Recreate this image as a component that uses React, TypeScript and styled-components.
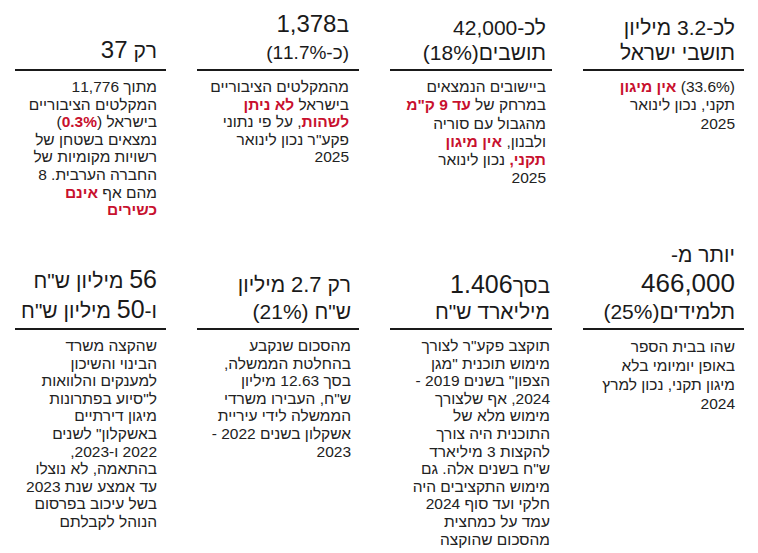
import React, { ReactNode } from 'react'
import styled, { createGlobalStyle } from 'styled-components'

const GlobalStyle = createGlobalStyle`
  html, body {
    margin: 0;
    padding: 0;
    background: #fff;
  }
  body {
    font-family: 'Liberation Sans', Arial, sans-serif;
  }
`

const Page = styled.div`
  width: 758px;
  height: 553px;
  overflow: hidden;
  box-sizing: border-box;
  padding: 0 14px 0 15px;
  direction: rtl;
  background: #fff;
  color: #1c1c1c;
`

const Row = styled.div<{ $height?: number }>`
  display: grid;
  grid-template-columns: 161px 162px 162px 151px;
  column-gap: 31px;
  height: ${p => (p.$height ? `${p.$height}px` : 'auto')};
`

const Cell = styled.div`
  display: flex;
  flex-direction: column;
`

const Head = styled.div<{ $height: number; $inset: number }>`
  height: ${p => p.$height}px;
  box-sizing: border-box;
  display: flex;
  flex-direction: column;
  justify-content: flex-end;
  padding: 0 ${p => p.$inset}px 4px 0;
`

const HeadText = styled.div`
  font-size: 21px;
  line-height: 1.2;
  text-align: right;
  white-space: nowrap;
  color: #1a1a1a;
`

const Big = styled.span<{ $size?: number }>`
  font-size: ${p => p.$size ?? 25}px;
`

const Rule = styled.div`
  height: 2px;
  background: #1a1a1a;
`

const Body = styled.div<{ $inset: number; $lineHeight?: number }>`
  padding: 7px ${p => p.$inset}px 0 0;
  font-size: 15.5px;
  line-height: ${p => p.$lineHeight ?? 17.6}px;
  text-align: right;
  white-space: nowrap;
  color: #222;
`

const Hot = styled.b`
  color: #c8102e;
  font-weight: bold;
`

type Item = { head: ReactNode; body: ReactNode; inset?: number; lineHeight?: number }

const topRow: Item[] = [
  {
    lineHeight: 18.3,
    head: (
      <>
        לכ-3.2 מיליון
        <br />
        תושבי ישראל
      </>
    ),
    body: (
      <>
        (33.6%) <Hot>אין מיגון</Hot>
        <br />
        תקני, נכון לינואר
        <br />
        2025
      </>
    )
  },
  {
    inset: 6,
    lineHeight: 18.3,
    head: (
      <>
        לכ-42,000
        <br />
        תושבים(18%)
      </>
    ),
    body: (
      <>
        ביישובים הנמצאים
        <br />
        במרחק של <Hot>עד 9 ק"מ</Hot>
        <br />
        מהגבול עם סוריה
        <br />
        ולבנון, <Hot>אין מיגון</Hot>
        <br />
        <Hot>תקני,</Hot> נכון לינואר
        <br />
        2025
      </>
    )
  },
  {
    inset: 10,
    head: (
      <>
        ב<Big $size={24}>1,378</Big>
        <br />
        <Big $size={19}>(כ-11.7%)</Big>
      </>
    ),
    body: (
      <>
        מהמקלטים הציבוריים
        <br />
        בישראל <Hot>לא ניתן</Hot>
        <br />
        <Hot>לשהות</Hot>, על פי נתוני
        <br />
        פקע"ר נכון לינואר
        <br />
        2025
      </>
    )
  },
  {
    head: (
      <>
        רק <Big $size={24}>37</Big>
      </>
    ),
    body: (
      <>
        מתוך 11,776
        <br />
        המקלטים הציבוריים
        <br />
        בישראל (<Hot>0.3%</Hot>)
        <br />
        נמצאים בשטחן של
        <br />
        רשויות מקומיות של
        <br />
        החברה הערבית. 8
        <br />
        מהם אף <Hot>אינם</Hot>
        <br />
        <Hot>כשירים</Hot>
      </>
    )
  }
]

const bottomRow: Item[] = [
  {
    lineHeight: 19,
    head: (
      <>
        יותר מ-
        <br />
        <Big $size={26}>466,000</Big>
        <br />
        תלמידים(25%)
      </>
    ),
    body: (
      <>
        שהו בבית הספר
        <br />
        באופן יומיומי בלא
        <br />
        מיגון תקני, נכון למרץ
        <br />
        2024
      </>
    )
  },
  {
    inset: 2,
    head: (
      <>
        בסך<Big>1.406</Big>
        <br />
        מיליארד ש"ח
      </>
    ),
    body: (
      <>
        תוקצב פקע"ר לצורך
        <br />
        מימוש תוכנית "מגן
        <br />
        הצפון" בשנים 2019 -
        <br />
        2024, אף שלצורך
        <br />
        מימוש מלא של
        <br />
        התוכנית היה צורך
        <br />
        להקצות 3 מיליארד
        <br />
        ש"ח בשנים אלה. גם
        <br />
        מימוש התקציבים היה
        <br />
        חלקי ועד סוף 2024
        <br />
        עמד על כמחצית
        <br />
        מהסכום שהוקצה
      </>
    )
  },
  {
    inset: 8,
    head: (
      <>
        רק <Big $size={22}>2.7</Big> מיליון
        <br />
        ש"ח (21%)
      </>
    ),
    body: (
      <>
        מהסכום שנקבע
        <br />
        בהחלטת הממשלה,
        <br />
        בסך 12.63 מיליון
        <br />
        ש"ח, העבירו משרדי
        <br />
        הממשלה לידי עיריית
        <br />
        אשקלון בשנים 2022 -
        <br />
        2023
      </>
    )
  },
  {
    head: (
      <>
        <Big>56</Big> מיליון ש"ח
        <br />
        ו-<Big>50</Big> מיליון ש"ח
      </>
    ),
    body: (
      <>
        שהקצה משרד
        <br />
        הבינוי והשיכון
        <br />
        למענקים והלוואות
        <br />
        ל"סיוע בפתרונות
        <br />
        מיגון דירתיים
        <br />
        באשקלון" לשנים
        <br />
        2022 ו-2023,
        <br />
        בהתאמה, לא נוצלו
        <br />
        עד אמצע שנת 2023
        <br />
        בשל עיכוב בפרסום
        <br />
        הנוהל לקבלתם
      </>
    )
  }
]

const StatRow = ({ items, headHeight, height }: { items: Item[]; headHeight: number; height?: number }) => (
  <Row $height={height}>
    {items.map((item, idx) => (
      <Cell key={idx}>
        <Head $height={headHeight} $inset={item.inset ?? 9}>
          <HeadText>{item.head}</HeadText>
        </Head>
        <Rule />
        <Body $inset={item.inset ?? 9} $lineHeight={item.lineHeight}>
          {item.body}
        </Body>
      </Cell>
    ))}
  </Row>
)

export default function App() {
  return (
    <>
      <GlobalStyle />
      <Page>
        <StatRow items={topRow} headHeight={69} height={230} />
        <StatRow items={bottomRow} headHeight={98} />
      </Page>
    </>
  )
}
